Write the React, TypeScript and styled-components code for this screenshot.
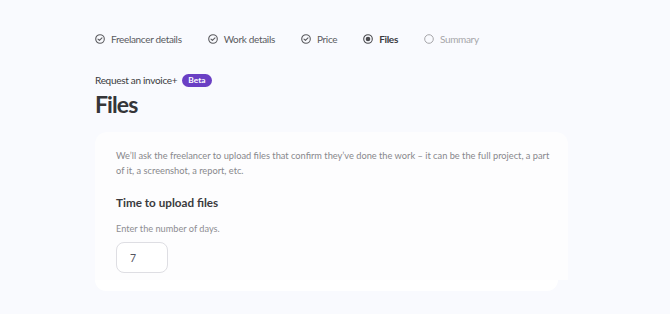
import React from "react";
import styled, { createGlobalStyle } from "styled-components";

const Global = createGlobalStyle`
  html, body { margin: 0; padding: 0; background: #f9fafe; }
  body { font-family: Lato, "Open Sans", sans-serif; -webkit-font-smoothing: antialiased; }
  * { box-sizing: border-box; }
`;

const Page = styled.div`
  width: 670px;
  height: 314px;
  padding: 30px 0 0 95px;
  background: #f9fafe;
  overflow: hidden;
`;

const Stepper = styled.nav`
  display: flex;
  align-items: center;
  height: 18px;
`;

type StepState = "done" | "active" | "todo";

const Step = styled.div<{ $state: StepState }>`
  display: flex;
  align-items: center;
  gap: 6px;
  margin-right: 26px;
  font-size: 10px;
  letter-spacing: -0.33px;
  color: ${(p) => (p.$state === "todo" ? "#a6a6a9" : p.$state === "active" ? "#3a3a3d" : "#5a5a5e")};
  font-weight: ${(p) => (p.$state === "active" ? 700 : 400)};
`;

const StepIcon = ({ state }: { state: StepState }) => {
  if (state === "done")
    return (
      <svg width="10" height="10" viewBox="0 0 10 10">
        <circle cx="5" cy="5" r="4.3" fill="none" stroke="#5a5a5e" strokeWidth="1.1" />
        <path d="M3 5.1 L4.4 6.4 L7 3.8" fill="none" stroke="#5a5a5e" strokeWidth="1.1" strokeLinecap="round" strokeLinejoin="round" />
      </svg>
    );
  if (state === "active")
    return (
      <svg width="10" height="10" viewBox="0 0 10 10">
        <circle cx="5" cy="5" r="4.3" fill="none" stroke="#4a4a4e" strokeWidth="1.1" />
        <circle cx="5" cy="5" r="2.3" fill="#4a4a4e" />
      </svg>
    );
  return (
    <svg width="10" height="10" viewBox="0 0 10 10">
      <circle cx="5" cy="5" r="4.3" fill="none" stroke="#a6a6a9" strokeWidth="1" />
    </svg>
  );
};

const Breadcrumb = styled.div`
  display: flex;
  align-items: center;
  gap: 5px;
  height: 14px;
  margin-top: 25px;
  font-size: 10px;
  letter-spacing: -0.3px;
  color: #3a3a3d;
`;

const Badge = styled.span`
  display: inline-flex;
  align-items: center;
  height: 13px;
  padding: 0 6px;
  border-radius: 7px;
  background: #6a3fc4;
  color: #fff;
  font-size: 8.4px;
  letter-spacing: 0;
  font-weight: 700;
`;

const Title = styled.h1`
  margin: 3px 0 0;
  font-size: 23px;
  line-height: 28px;
  letter-spacing: -0.9px;
  font-weight: 700;
  color: #353538;
`;

const Card = styled.section`
  margin-top: 14px;
  display: flex;
  flex-direction: column;
`;

const CardBody = styled.div`
  width: 473px;
  height: 148px;
  padding: 16px 21px 0;
  background: #fdfdfe;
  border-radius: 12px 12px 0 0;
`;

const CardFoot = styled.div`
  width: 463px;
  height: 11px;
  background: #ffffff;
  border-radius: 0 0 12px 12px;
`;

const Intro = styled.p`
  margin: 0;
  white-space: nowrap;
  font-size: 9.25px;
  line-height: 15px;
  color: #88888c;
`;

const Heading = styled.h2`
  margin: 16px 0 0;
  font-size: 11.7px;
  line-height: 16px;
  font-weight: 700;
  color: #3a3a3d;
`;

const Hint = styled.p`
  margin: 13px 0 0;
  font-size: 9.2px;
  line-height: 12px;
  color: #8e8e92;
`;

const Input = styled.div`
  margin-top: 7px;
  width: 52px;
  height: 31px;
  border: 1px solid #dedee3;
  border-radius: 8px;
  background: #fff;
  display: flex;
  align-items: center;
  padding-left: 13px;
  font-size: 10.5px;
  color: #55555f;
`;

export default function App() {
  return (
    <>
      <Global />
      <Page>
        <Stepper>
          <Step $state="done"><StepIcon state="done" />Freelancer details</Step>
          <Step $state="done"><StepIcon state="done" />Work details</Step>
          <Step $state="done"><StepIcon state="done" />Price</Step>
          <Step $state="active"><StepIcon state="active" />Files</Step>
          <Step $state="todo"><StepIcon state="todo" />Summary</Step>
        </Stepper>
        <Breadcrumb>
          Request an invoice+<Badge>Beta</Badge>
        </Breadcrumb>
        <Title>Files</Title>
        <Card>
          <CardBody>
            <Intro>
              We’ll ask the freelancer to upload files that confirm they’ve done the work – it can be the full project, a part
              <br />
              of it, a screenshot, a report, etc.
            </Intro>
            <Heading>Time to upload files</Heading>
            <Hint>Enter the number of days.</Hint>
            <Input>7</Input>
          </CardBody>
          <CardFoot />
        </Card>
      </Page>
    </>
  );
}
